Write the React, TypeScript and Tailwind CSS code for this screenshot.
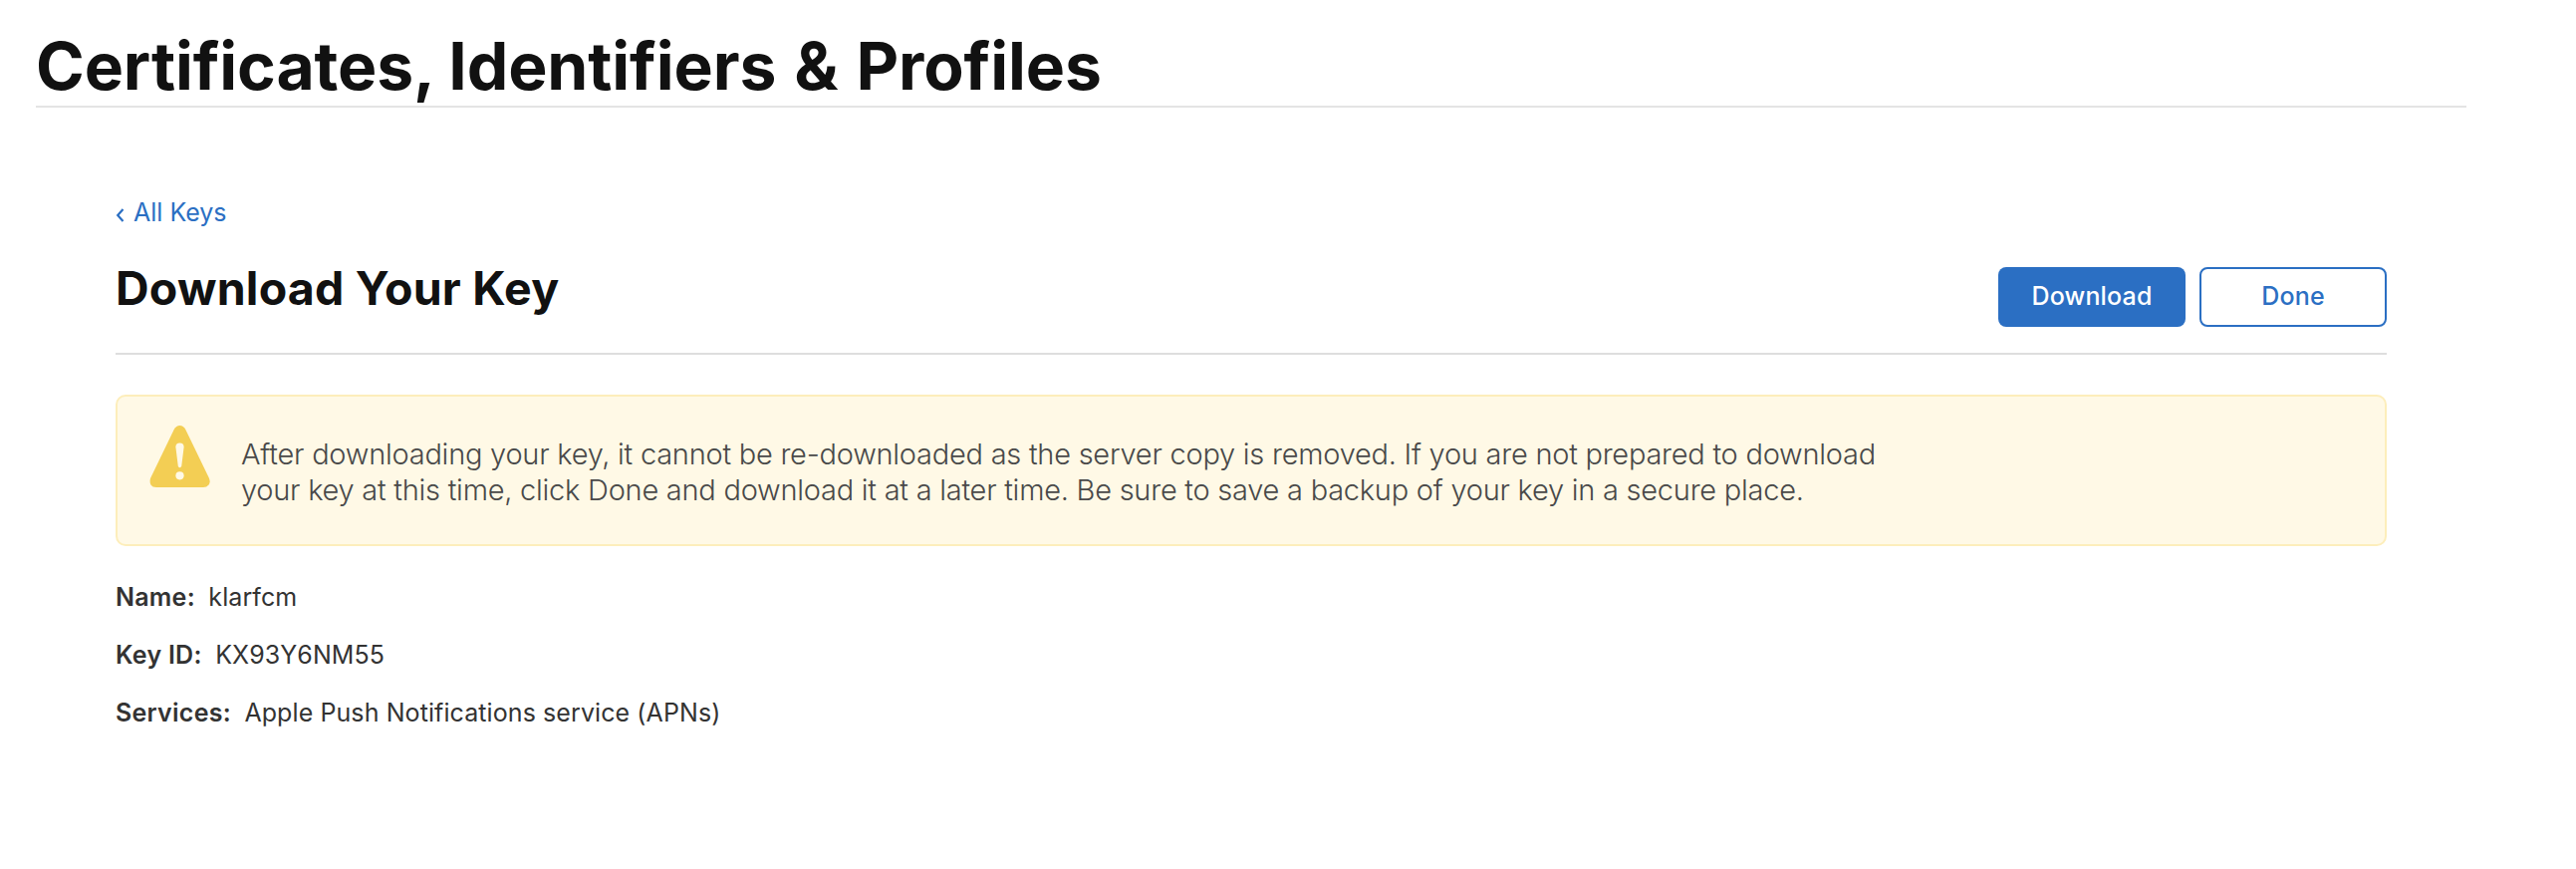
import React from "react";

const Row = ({ label, value }: { label: string; value: string }) => (
  <div className="flex h-[58px] items-center gap-[13.5px] text-[25px] text-[#333]">
    <dt className="font-semibold tracking-[0.25px]">{label}</dt>
    <dd className="tracking-[0.09px]">{value}</dd>
  </div>
);

export default function App() {
  return (
    <main className="h-[872px] bg-white px-9 font-['Inter',sans-serif]">
      <h1 className="h-[108px] w-[2440px] border-b-2 border-[#e4e4e4] pt-[26px] text-[66px] leading-[80px] font-bold tracking-[-0.14px] text-[#111]">
        Certificates, Identifiers<span className="[word-spacing:2.5px]"> &amp; </span>Profiles
      </h1>
      <section className="ml-20 w-[2280px] pt-[90px]">
        <a className="flex h-[30px] items-center gap-2 pt-px text-[25px] text-[#2b6fc3]">
          <svg className="mt-1 h-4 w-2.5" viewBox="0 0 10 16" fill="none" stroke="currentColor" strokeWidth="2.2"><path d="M7.5 2 2.2 8l5.3 6" /></svg>
          All Keys
        </a>
        <header className="flex h-[128px] justify-between border-b-2 border-[#dedede]">
          <h2 className="pt-[31px] text-[46.5px] leading-[60px] font-bold tracking-[0.22px] text-[#111]">Download Your Key</h2>
          <div className="flex gap-[14px] pt-10 text-[25px] font-medium tracking-[0.15px]">
            <button className="h-[60px] w-[188px] rounded-lg bg-[#2b6fc3] text-white">Download</button>
            <button className="h-[60px] w-[188px] rounded-lg border-2 border-[#2b6fc3] text-[#2b6fc3]">Done</button>
          </div>
        </header>
        <aside className="mt-10 flex h-[152px] rounded-[10px] border-2 border-[#fdeebb] bg-[#fff9e6] pt-[29px] pl-[31.5px]">
          <svg className="h-[62px] w-[61px]" viewBox="0 0 61 62"><path d="M24.7 4Q27 0 30.5 0T36.3 4L60 53Q61.5 57 59.5 59.5T54 62H7Q3 62 1.5 59.5T1 53Z" fill="#f3ce54" /><path d="M26.4 21.5a4.1 4.1 0 0 1 8.2 0L32.2 40.8q-1.7 3-3.4 0Z" fill="#fff9e6" /><circle cx="30.5" cy="50.3" r="4.1" fill="#fff9e6" /></svg>
          <p className="ml-[31.5px] pt-[11px] text-[29px] leading-9 font-light tracking-[-0.25px] text-[#494949]">
            After downloading your key, it cannot be re-downloaded as the server copy is removed. If you are not prepared to download<br />
            your key at this time, click Done and download it at a later time. Be sure to save a backup of your key in a secure place.
          </p>
        </aside>
        <dl className="mt-[23px]">
          <Row label="Name:" value="klarfcm" />
          <Row label="Key ID:" value="KX93Y6NM55" />
          <Row label="Services:" value="Apple Push Notifications service (APNs)" />
        </dl>
      </section>
    </main>
  );
}
